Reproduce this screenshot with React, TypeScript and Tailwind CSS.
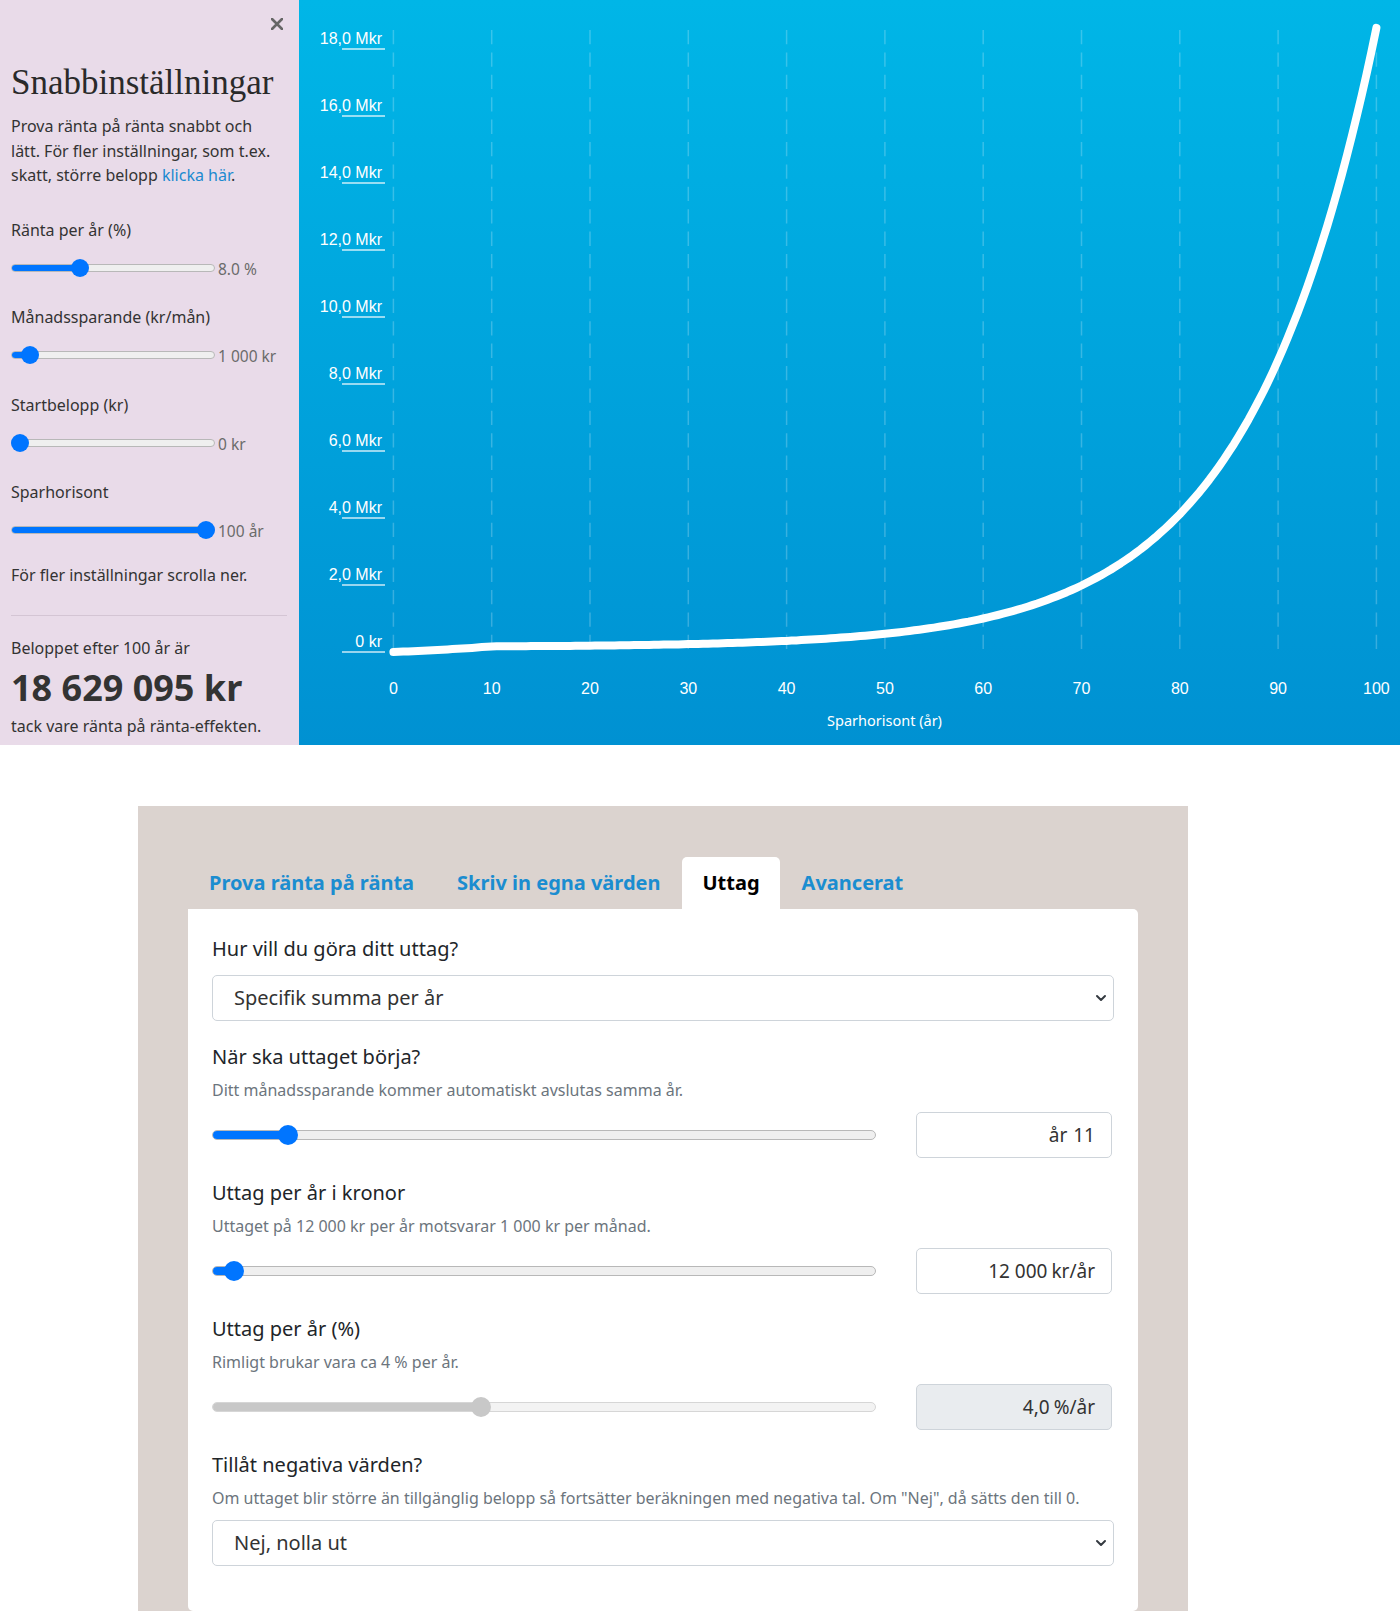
import React from 'react';

// curve data: saving 1000 kr/mån until year 10, then 12 000 kr/år withdrawal
const B10 = 150000 + (18629095 - 150000) / Math.pow(1.08, 90);
function balance(t: number) {
    if (t <= 10) return (B10 * (Math.pow(1.08, t) - 1)) / (Math.pow(1.08, 10) - 1);
    return 150000 + (B10 - 150000) * Math.pow(1.08, t - 10);
}

const X0 = 393.4;
const XSTEP = 9.83;
const Y0 = 652;
const PER_2M = 67;

function curvePath() {
    const pts: string[] = [];
    for (let t = 0; t <= 100; t += 0.5) {
        const x = X0 + t * XSTEP;
        const y = Y0 - (balance(t) / 2000000) * PER_2M;
        pts.push(`${pts.length === 0 ? 'M' : 'L'}${x.toFixed(1)} ${y.toFixed(1)}`);
    }
    return pts.join(' ');
}

function Chart() {
    const yTicks = Array.from({ length: 10 }, (_, i) => i);
    const xTicks = Array.from({ length: 11 }, (_, i) => i * 10);
    return (
        <div className="flex-1 bg-linear-to-b from-[#00b6e7] to-[#0091d2]">
            <svg width={1101} height={745} viewBox="299 0 1101 745" className="block">
                {xTicks.map((t) => (
                    <line
                        key={'g' + t}
                        x1={X0 + t * XSTEP}
                        x2={X0 + t * XSTEP}
                        y1={30}
                        y2={652}
                        stroke="#ffffff"
                        strokeOpacity={0.22}
                        strokeWidth={1.5}
                        strokeDasharray="14.3 8.1"
                    />
                ))}
                {yTicks.map((i) => {
                    const y = Y0 - i * PER_2M;
                    return (
                        <g key={'y' + i}>
                            <line x1={342} x2={385} y1={y} y2={y} stroke="#ffffff" strokeOpacity={0.8} strokeWidth={1.5} />
                            <text
                                x={382}
                                y={y - 5}
                                textAnchor="end"
                                fill="#ffffff"
                                fontSize={16}
                                fontFamily="'Liberation Sans', Arial, sans-serif"
                            >
                                {i === 0 ? '0 kr' : `${i * 2},0 Mkr`}
                            </text>
                        </g>
                    );
                })}
                {xTicks.map((t) => (
                    <text
                        key={'x' + t}
                        x={X0 + t * XSTEP}
                        y={694}
                        textAnchor="middle"
                        fill="#ffffff"
                        fontSize={16}
                        fontFamily="'Liberation Sans', Arial, sans-serif"
                    >
                        {t}
                    </text>
                ))}
                <text
                    x={884.5}
                    y={726}
                    textAnchor="middle"
                    fill="#ffffff"
                    fontSize={14.5}
                    fontFamily="'Noto Sans', sans-serif"
                >
                    Sparhorisont (år)
                </text>
                <path d={curvePath()} fill="none" stroke="#ffffff" strokeWidth={8} strokeLinecap="round" strokeLinejoin="round" />
            </svg>
        </div>
    );
}

type SliderProps = {
    pos: number;
    big?: boolean;
    disabled?: boolean;
};

// native-looking range input drawn with divs
function Slider({ pos, big, disabled }: SliderProps) {
    const d = big ? 20 : 18;
    return (
        <div className={`relative flex items-center w-full ${big ? 'h-[20px]' : 'h-[18px]'}`}>
            <div
                className={`w-full rounded-full border overflow-hidden ${big ? 'h-[10px]' : 'h-[8px]'} ${
                    disabled ? 'bg-[#f3f3f3] border-[#d6d6d6]' : 'bg-[#efefef] border-[#b8b8b8]'
                }`}
            >
                <div className={`h-full ${disabled ? 'bg-[#c8c8c8]' : 'bg-[#0075ff]'}`} style={{ width: pos }} />
            </div>
            <div
                className={`absolute top-0 rounded-full ${big ? 'w-[20px] h-[20px]' : 'w-[18px] h-[18px]'} ${
                    disabled ? 'bg-[#c8c8c8]' : 'bg-[#0075ff]'
                }`}
                style={{ left: pos - d / 2 }}
            />
        </div>
    );
}

function SideSlider({ label, pos, value }: { label: string; pos: number; value: string }) {
    return (
        <>
            <div className="leading-6">{label}</div>
            <div className="flex items-center mt-[16px] h-[20px]">
                <div className="w-[204px]">
                    <Slider pos={pos} />
                </div>
                <span className="pl-[3px] pt-[5px] text-[15.5px] text-[#6b6b6b]">{value}</span>
            </div>
        </>
    );
}

function SidePanel() {
    return (
        <aside className="w-[299px] shrink-0 bg-[#e9dbe9] pl-[11px] pr-[12px] text-[16px] text-[#333] font-['Noto_Sans',sans-serif]">
            <div className="flex justify-end pt-[18px] pr-[4px]">
                <svg width="12" height="12" viewBox="0 0 12 12">
                    <path d="M1 1 L11 11 M11 1 L1 11" stroke="#666" strokeWidth="2.6" strokeLinecap="round" />
                </svg>
            </div>
            <h1 className="mt-[33px] text-[35px] leading-[40px] text-[#2a2a2a] font-['Liberation_Serif',serif]">
                Snabbinställningar
            </h1>
            <p className="mt-[11px] w-[268px] leading-[24.5px]">
                Prova ränta på ränta snabbt och lätt. För fler inställningar, som t.ex. skatt, större belopp{' '}
                <a className="text-[#1b8ad0]">klicka här</a>.
            </p>
            <div className="mt-[30px]">
                <SideSlider label="Ränta per år (%)" pos={69} value="8.0 %" />
            </div>
            <div className="mt-[27px]">
                <SideSlider label="Månadssparande (kr/mån)" pos={19} value="1 000 kr" />
            </div>
            <div className="mt-[28px]">
                <SideSlider label="Startbelopp (kr)" pos={9} value="0 kr" />
            </div>
            <div className="mt-[27px]">
                <SideSlider label="Sparhorisont" pos={195} value="100 år" />
            </div>
            <div className="mt-[23px] leading-6">För fler inställningar scrolla ner.</div>
            <div className="mt-[28px] h-px bg-[#d4c5d4]" />
            <div className="mt-[20px] leading-6">Beloppet efter 100 år är</div>
            <div className="mt-[8px] text-[36px] leading-[40px] font-bold">18 629 095 kr</div>
            <div className="mt-[6px] leading-6">tack vare ränta på ränta-effekten.</div>
        </aside>
    );
}

function Chevron() {
    return (
        <svg width="12" height="12" viewBox="0 0 12 12">
            <path d="M2 4 L6 8 L10 4" fill="none" stroke="#343a40" strokeWidth="2" strokeLinecap="round" strokeLinejoin="round" />
        </svg>
    );
}

function Select({ value }: { value: string }) {
    return (
        <div className="h-[46px] flex items-center justify-between rounded-[5px] border border-[#ced4da] pl-[21px] pr-[6px] text-[20px] text-[#333]">
            <span>{value}</span>
            <Chevron />
        </div>
    );
}

function ValueBox({ num, unit, disabled, unitFirst }: { num: string; unit: string; disabled?: boolean; unitFirst?: boolean }) {
    return (
        <div
            className={`w-[196px] h-[46px] shrink-0 flex items-center justify-end rounded-[5px] border border-[#ced4da] pr-[16px] text-[19px] text-[#333] ${
                disabled ? 'bg-[#e9ecef]' : 'bg-white'
            }`}
        >
            {unitFirst ? (
                <>
                    <span>{unit}</span>
                    <span className="ml-[6px]">{num}</span>
                </>
            ) : (
                <>
                    <span>{num}</span>
                    <span className="ml-[4px]">{unit}</span>
                </>
            )}
        </div>
    );
}

function Label({ children }: { children: React.ReactNode }) {
    return <div className="text-[20px] leading-[28px] text-[#212529]">{children}</div>;
}

function Help({ children }: { children: React.ReactNode }) {
    return <div className="mt-[8px] text-[16px] leading-[22px] text-[#6c757d]">{children}</div>;
}

function SliderRow({ pos, box, disabled }: { pos: number; box: React.ReactNode; disabled?: boolean }) {
    return (
        <div className="mt-[11px] h-[46px] flex items-center gap-[40px]">
            <div className="w-[664px]">
                <Slider pos={pos} big disabled={disabled} />
            </div>
            {box}
        </div>
    );
}

const tabs = ['Prova ränta på ränta', 'Skriv in egna värden', 'Uttag', 'Avancerat'];

function Calculator() {
    return (
        <section className="ml-[138px] w-[1050px] bg-[#dbd3cf] pt-[51px] px-[50px] pb-[50px] font-['Noto_Sans',sans-serif]">
            <nav className="flex gap-px h-[52px]">
                {tabs.map((t) =>
                    t === 'Uttag' ? (
                        <div key={t} className="flex items-center px-[20px] rounded-t-[5px] bg-white text-[20px] font-bold text-black">
                            {t}
                        </div>
                    ) : (
                        <div key={t} className="flex items-center px-[21px] text-[20px] font-bold text-[#1b8dd0]">
                            {t}
                        </div>
                    ),
                )}
            </nav>
            <div className="bg-white rounded-[5px] rounded-tl-none px-6 pt-[26px] pb-[45px]">
                <Label>Hur vill du göra ditt uttag?</Label>
                <div className="mt-3">
                    <Select value="Specifik summa per år" />
                </div>

                <div className="mt-[22px]">
                    <Label>När ska uttaget börja?</Label>
                    <Help>Ditt månadssparande kommer automatiskt avslutas samma år.</Help>
                    <SliderRow pos={76} box={<ValueBox num="11" unit="år" unitFirst />} />
                </div>

                <div className="mt-[21px]">
                    <Label>Uttag per år i kronor</Label>
                    <Help>Uttaget på 12 000 kr per år motsvarar 1 000 kr per månad.</Help>
                    <SliderRow pos={22} box={<ValueBox num="12 000" unit="kr/år" />} />
                </div>

                <div className="mt-[21px]">
                    <Label>Uttag per år (%)</Label>
                    <Help>Rimligt brukar vara ca 4 % per år.</Help>
                    <SliderRow pos={269} disabled box={<ValueBox num="4,0" unit="%/år" disabled />} />
                </div>

                <div className="mt-[21px]">
                    <Label>Tillåt negativa värden?</Label>
                    <Help>
                        Om uttaget blir större än tillgänglig belopp så fortsätter beräkningen med negativa tal. Om "Nej", då sätts den till 0.
                    </Help>
                    <div className="mt-[11px]">
                        <Select value="Nej, nolla ut" />
                    </div>
                </div>
            </div>
        </section>
    );
}

export default function App() {
    return (
        <div className="w-[1400px] bg-white">
            <div className="flex h-[745px]">
                <SidePanel />
                <Chart />
            </div>
            <div className="h-[61px]" />
            <Calculator />
        </div>
    );
}
